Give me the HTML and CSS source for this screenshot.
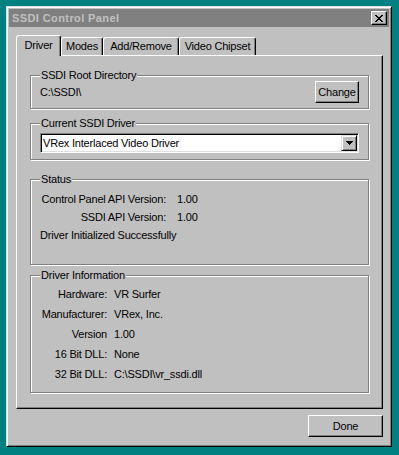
FILE: index.html
```html
<!DOCTYPE html>
<html lang="en">

<head>
    <meta charset="UTF-8">
    <meta name="viewport" content="width=device-width, initial-scale=1.0">
    <title>SSDI Control Panel</title>
    <link rel="stylesheet" href="styles.css">
</head>

<body>
    <div class="window">
        <div class="titlebar">
            <span class="title">SSDI Control Panel</span>
            <button class="close">
                <svg width="8" height="7" viewBox="0 0 8 7" shape-rendering="crispEdges">
                    <path fill="#000" d="M0 0h2v1H0zM6 0h2v1H6zM1 1h2v1H1zM5 1h2v1H5zM2 2h4v1H2zM3 3h2v1H3zM2 4h4v1H2zM1 5h2v1H1zM5 5h2v1H5zM0 6h2v1H0zM6 6h2v1H6z"/>
                </svg>
            </button>
        </div>

        <div class="tabs">
            <div class="tab active tab-driver">Driver</div>
            <div class="tab tab-modes">Modes</div>
            <div class="tab tab-add">Add/Remove</div>
            <div class="tab tab-video">Video Chipset</div>
        </div>

        <div class="panel">
            <fieldset class="group group-root">
                <legend>SSDI Root Directory</legend>
                <div class="root-row">
                    <span>C:\SSDI\</span>
                    <button class="btn btn-change">Change</button>
                </div>
            </fieldset>

            <fieldset class="group group-driver">
                <legend>Current SSDI Driver</legend>
                <div class="combo">
                    <span class="combo-text">VRex Interlaced Video Driver</span>
                    <span class="combo-arrow">
                        <svg width="7" height="4" viewBox="0 0 7 4" shape-rendering="crispEdges">
                            <path fill="#000" d="M0 0h7v1H0zM1 1h5v1H1zM2 2h3v1H2zM3 3h1v1H3z"/>
                        </svg>
                    </span>
                </div>
            </fieldset>

            <fieldset class="group group-status">
                <legend>Status</legend>
                <div class="status-info">
                    <span class="key">Control Panel API Version:</span><span>1.00</span>
                    <span class="key">SSDI API Version:</span><span>1.00</span>
                    <span class="full">Driver Initialized Successfully</span>
                </div>
            </fieldset>

            <fieldset class="group group-info">
                <legend>Driver Information</legend>
                <div class="driver-info">
                    <span class="key">Hardware:</span><span>VR Surfer</span>
                    <span class="key">Manufacturer:</span><span>VRex, Inc.</span>
                    <span class="key">Version</span><span>1.00</span>
                    <span class="key">16 Bit DLL:</span><span>None</span>
                    <span class="key">32 Bit DLL:</span><span>C:\SSDI\vr_ssdi.dll</span>
                </div>
            </fieldset>
        </div>

        <div class="footer">
            <button class="btn btn-done">Done</button>
        </div>
    </div>
</body>

</html>
```

FILE: styles.css
```css
* {
    box-sizing: border-box;
}

body {
    margin: 0;
    background-color: #008080;
    font-family: "Liberation Sans", Arial, sans-serif;
    font-size: 11px;
    letter-spacing: -0.2px;
    color: #000;
}

.window {
    width: 386px;
    margin: 6px 0 0 6px;
    background-color: #c0c0c0;
    border: 1px solid;
    border-color: #dfdfdf #000 #000 #dfdfdf;
    box-shadow: inset 1px 1px #fff, inset -1px -1px #808080;
    padding: 2px;
}

.titlebar {
    height: 18px;
    background-color: #808080;
    display: flex;
    align-items: center;
    justify-content: space-between;
    padding: 0 2px 0 3px;
}

.title {
    color: #c0c0c0;
    font-weight: bold;
    letter-spacing: 0.4px;
    line-height: 13px;
}

.close {
    width: 16px;
    height: 14px;
    padding: 0;
    background-color: #c0c0c0;
    border: 1px solid;
    border-color: #fff #000 #000 #fff;
    box-shadow: inset -1px -1px #808080;
    display: flex;
    align-items: center;
    justify-content: center;
}

.close svg {
    display: block;
}

/* tab strip */
.tabs {
    display: flex;
    align-items: flex-end;
    margin: 8px 6px 0 7px;
}

.tab {
    height: 18px;
    padding-top: 2px;
    line-height: 13px;
    text-align: center;
    border: 1px solid;
    border-bottom: none;
    border-color: #fff #000 transparent #fff;
    border-radius: 3px 3px 0 0;
    box-shadow: inset -1px 0 #808080;
    background-color: #c0c0c0;
}

.tab.active {
    height: 21px;
    padding-top: 3px;
    margin-bottom: -1px;
    position: relative;
    z-index: 1;
}

.tab-driver {
    width: 45px;
}

.tab-modes {
    width: 42px;
}

.tab-add {
    width: 76px;
}

.tab-video {
    width: 77px;
}

.panel {
    margin: 0 6px 0 7px;
    border: 1px solid;
    border-color: #fff #000 #000 #fff;
    box-shadow: inset -1px -1px #808080;
    padding: 14px 13px 15px 13px;
}

/* group boxes */
.group {
    margin: 0;
    min-width: 0;
    border: 1px solid #808080;
    box-shadow: inset 1px 1px #fff, 1px 1px #fff;
    padding: 0 9px;
}

.group legend {
    padding: 0 1px;
    line-height: 11px;
    background-color: #c0c0c0;
}

.group-root {
    padding-bottom: 5px;
}

.group-driver {
    margin-top: 9px;
    padding-top: 4px;
    padding-bottom: 6px;
}

.group-status {
    margin-top: 14px;
    padding-top: 5px;
    padding-bottom: 20px;
}

.group-info {
    margin-top: 5px;
    padding-top: 3px;
    padding-bottom: 8px;
}

.root-row {
    display: flex;
    align-items: center;
    justify-content: space-between;
}

.btn {
    padding: 0;
    font: inherit;
    letter-spacing: inherit;
    color: #000;
    background-color: #c0c0c0;
    border: 1px solid;
    border-color: #fff #000 #000 #fff;
    box-shadow: inset -1px -1px #808080;
}

.btn-change {
    width: 44px;
    height: 22px;
}

.combo {
    height: 20px;
    display: flex;
    align-items: center;
    background-color: #fff;
    border: 1px solid;
    border-color: #808080 #fff #fff #808080;
    box-shadow: inset 1px 1px #000, inset -1px -1px #dfdfdf;
    padding: 1px;
}

.combo-text {
    flex: 1;
    padding-left: 1px;
    line-height: 16px;
}

.combo-arrow {
    width: 16px;
    height: 16px;
    background-color: #c0c0c0;
    border: 1px solid;
    border-color: #dfdfdf #000 #000 #dfdfdf;
    box-shadow: inset 1px 1px #fff, inset -1px -1px #808080;
    display: flex;
    align-items: center;
    justify-content: center;
}

.combo-arrow svg {
    display: block;
}

.status-info {
    display: grid;
    grid-template-columns: 126px auto;
    column-gap: 11px;
    line-height: 18px;
}

.driver-info {
    display: grid;
    grid-template-columns: 67px auto;
    column-gap: 7px;
    line-height: 20px;
}

.key {
    text-align: right;
    white-space: nowrap;
}

.full {
    grid-column: 1 / -1;
}

.footer {
    display: flex;
    justify-content: flex-end;
    padding: 6px 6px 7px 0;
}

.btn-done {
    width: 75px;
    height: 22px;
}
```
